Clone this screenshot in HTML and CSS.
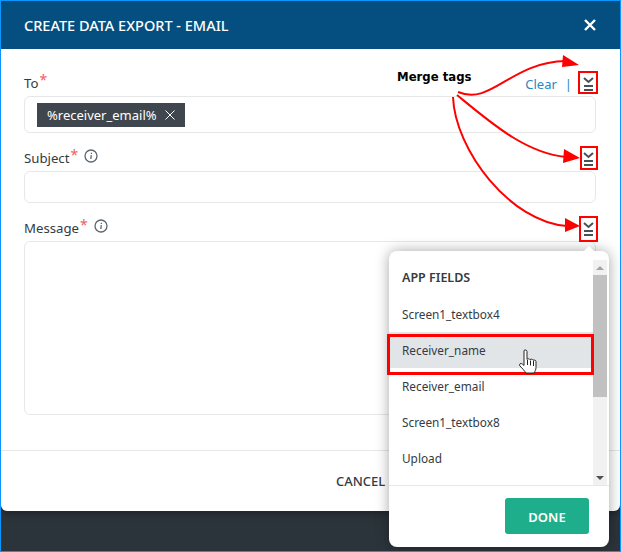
FILE: index.html
```html
<!DOCTYPE html>
<html lang="en">
<head>
  <meta charset="UTF-8" />
  <title>Create Data Export - Email</title>
  <link rel="stylesheet" href="styles.css">
</head>
<body>
  <div class="page">
    <div class="modal">
      <header class="modal-header">
        <h1>Create Data Export - Email</h1>
        <svg class="close-icon" width="14" height="14" viewBox="0 0 14 14"><path d="M2 2l10 10M12 2L2 12" /></svg>
      </header>

      <div class="modal-body">
        <div class="label-row label-first">
          <label>To<span class="req">*</span></label>
          <div class="label-actions">
            <a class="clear">Clear</a>
            <span class="divider">|</span>
            <svg class="tag-icon" width="11" height="14" viewBox="0 0 11 14"><path d="M1 1l4.500 4 4.500-4M1 9h9M1 13h9" /></svg>
          </div>
        </div>
        <div class="input input-to">
          <span class="chip">%receiver_email%
            <svg width="10" height="10" viewBox="0 0 10 10"><path d="M.5.5l9 9M9.500.5l-9 9" /></svg>
          </span>
        </div>

        <div class="label-row">
          <label>Subject<span class="req">*</span>
            <svg class="info-icon" width="14" height="14" viewBox="0 0 14 14"><circle cx="7" cy="7" r="6" /><path d="M7.300 6.200L6.800 10M7.400 3.800v1.200" /></svg>
          </label>
          <svg class="tag-icon" width="11" height="14" viewBox="0 0 11 14"><path d="M1 1l4.500 4 4.500-4M1 9h9M1 13h9" /></svg>
        </div>
        <div class="input input-subject"></div>

        <div class="label-row">
          <label>Message<span class="req">*</span>
            <svg class="info-icon" width="14" height="14" viewBox="0 0 14 14"><circle cx="7" cy="7" r="6" /><path d="M7.300 6.200L6.800 10M7.400 3.800v1.200" /></svg>
          </label>
          <svg class="tag-icon" width="11" height="14" viewBox="0 0 11 14"><path d="M1 1l4.500 4 4.500-4M1 9h9M1 13h9" /></svg>
        </div>
        <div class="input input-message"></div>
      </div>

      <footer class="modal-footer">
        <a class="cancel">Cancel</a>
      </footer>
    </div>

    <div class="popup">
      <div class="popup-list">
        <div class="popup-items">
          <h2>App Fields</h2>
          <div class="item">Screen1_textbox4</div>
          <div class="item active">Receiver_name</div>
          <div class="item">Receiver_email</div>
          <div class="item">Screen1_textbox8</div>
          <div class="item">Upload</div>
        </div>
        <div class="scrollbar">
          <span class="arrow-up"></span>
          <span class="thumb"></span>
          <span class="arrow-down"></span>
        </div>
      </div>
      <div class="popup-footer">
        <button class="done">Done</button>
      </div>
    </div>

    <!-- annotations drawn on top of the screenshot -->
    <span class="merge-note">Merge tags</span>
    <svg class="notes" width="621" height="552" viewBox="0 0 621 552">
      <g class="note-box">
        <rect x="579" y="72" width="18" height="21" />
        <rect x="581" y="147" width="16" height="22" />
        <rect x="580" y="217" width="17" height="24" />
        <rect class="note-row" x="388.500" y="335.500" width="204" height="38" />
      </g>
      <g class="note-line">
        <path d="M458 92C492 106 510 62 566 61" />
        <path d="M457 95C490 122 525 153 566 157" />
        <path d="M453 97C455 150 510 222 567 226" />
      </g>
      <g class="note-head">
        <path d="M579 65L563 55L562 67Z" />
        <path d="M580 158L564 149L563 163Z" />
        <path d="M580 226L565 218L565 232Z" />
      </g>
      <path class="hand" d="M524 350.500c1 -1 3 -.5 3 1v8c.5 -1 2.500 -1 3 .2c.8 -.8 2.500 -.7 3 .5c1 -.5 3 0 3 1.300v6c0 2.500 -1 3.500 -2 5.500h-8c-1.500 -2 -3.500 -4.500 -6 -7c-1 -1 -.5 -2.500 1 -2.500c.8 0 2 1 3 2v-15zM527.500 360v5M530.500 360.500v5M533.500 361v5" />
    </svg>
  </div>
</body>
</html>
```

FILE: styles.css
```css
:root {
  --header-color: #044f7f;
  --line-color: #e6e7e8;
  --text-color: #343b42;
  --red-note: #f00;
}

* {
  box-sizing: border-box;
}

body {
  margin: 0;
  font-family: "Noto Sans", sans-serif;
  font-size: 13px;
  color: var(--text-color);
}

.page {
  position: relative;
  width: 621px;
  height: 552px;
  overflow: hidden;
  background: #2c343b;
  border: 1px solid #0a96ff;
}

.modal {
  height: 510px;
  background: #fff;
  border-radius: 0 0 6px 6px;
  box-shadow: 0 2px 8px rgba(0,0,0,0.4);
}

.modal-header {
  display: flex;
  align-items: center;
  justify-content: space-between;
  height: 48px;
  padding: 0 23px;
  background: var(--header-color);
  color: #fff;
}

.modal-header h1 {
  margin: 0;
  font-size: 14.500px;
  font-weight: 500;
  text-transform: uppercase;
}

.close-icon path {
  fill: none;
  stroke: #fff;
  stroke-width: 2.400;
}

.modal-body {
  height: 402px;
  padding: 23px 24px 0 23px;
  border-bottom: 1px solid var(--line-color);
}

.label-row {
  display: flex;
  align-items: center;
  justify-content: space-between;
  height: 25px;
  margin-top: 13px;
}

.label-first {
  height: 24px;
  margin-top: 0;
}

.label-row label {
  display: flex;
  align-items: flex-start;
  margin-top: -2px;
  font-size: 13.200px;
}

.req {
  margin-left: 1px;
  color: #f0605c;
  font-size: 14px;
  line-height: 12px;
}

.info-icon {
  margin-left: 6px;
}

.info-icon circle, .info-icon path {
  fill: none;
  stroke: #5c6670;
  stroke-width: 1.300;
}

.label-actions {
  display: flex;
  align-items: center;
}

.clear {
  color: #2a87c0;
  font-size: 13px;
}

.divider {
  margin: 0 11px 0 8px;
  color: #2a87c0;
}

.tag-icon {
  margin-right: 2px;
}

.tag-icon path {
  fill: none;
  stroke: #4a5058;
  stroke-width: 2;
}

.input {
  border: 1px solid var(--line-color);
  border-radius: 6px;
}

.input-to {
  height: 37px;
  padding: 6px 12px;
}

.input-subject {
  height: 32px;
}

.input-message {
  height: 174px;
}

.chip {
  display: inline-flex;
  align-items: center;
  gap: 8px;
  height: 24px;
  padding: 0 10px;
  background: #40464d;
  color: #fff;
}

.chip path {
  fill: none;
  stroke: #fff;
  stroke-width: 1;
}

.modal-footer {
  display: flex;
  align-items: center;
  height: 60px;
  padding-left: 335px;
}

.cancel {
  font-size: 13px;
  font-weight: 500;
  text-transform: uppercase;
}

.popup {
  position: absolute;
  left: 388px;
  top: 250px;
  width: 220px;
  height: 296px;
  background: #fff;
  border-radius: 8px;
  box-shadow: 0 0 14px rgba(0,0,0,0.35);
}

.popup::before {
  content: "";
  position: absolute;
  top: -5px;
  left: 195px;
  border: 5px solid transparent;
  border-top: 0;
  border-bottom-color: #fff;
}

.popup-list {
  display: flex;
  height: 235px;
  border-bottom: 1px solid var(--line-color);
}

.popup-items {
  flex: 1;
  min-width: 0;
}

.popup-items h2 {
  margin: 0;
  height: 45px;
  padding: 18px 13px 0;
  font-size: 12.500px;
  font-weight: 600;
  line-height: 18px;
  text-transform: uppercase;
}

.item {
  display: flex;
  align-items: center;
  height: 36px;
  padding: 0 13px 1px;
  font-size: 11.800px;
}

.item.active {
  background: #e2e5e8;
}

.scrollbar {
  display: flex;
  flex-direction: column;
  align-items: center;
  width: 14px;
  margin: 9px 2px 0 0;
  background: #f1f1f1;
}

.arrow-up {
  margin: 6px 0 5px;
  border: 4px solid transparent;
  border-top: 0;
  border-bottom: 4px solid #a3a3a3;
}

.thumb {
  width: 14px;
  height: 122px;
  background: #c1c1c1;
}

.arrow-down {
  margin-top: auto;
  margin-bottom: 5px;
  border: 4px solid transparent;
  border-bottom: 0;
  border-top: 4px solid #505050;
}

.popup-footer {
  display: flex;
  justify-content: flex-end;
  padding: 12px 20px 0 0;
}

.done {
  width: 84px;
  height: 36px;
  padding: 2px 0 0;
  border: 0;
  border-radius: 3px;
  background: #1fae8b;
  color: #fff;
  font-family: inherit;
  font-size: 13px;
  font-weight: 600;
  text-transform: uppercase;
}

.merge-note {
  position: absolute;
  left: 396px;
  top: 69px;
  color: #000;
  font-family: "DejaVu Sans", sans-serif;
  font-size: 11.700px;
  font-weight: 700;
}

.notes {
  position: absolute;
  left: -1px;
  top: -1px;
}

.note-box rect {
  fill: none;
  stroke: var(--red-note);
  stroke-width: 2;
}

.note-box .note-row {
  stroke-width: 3;
}

.note-line path {
  fill: none;
  stroke: var(--red-note);
  stroke-width: 2;
}

.note-head path {
  fill: var(--red-note);
}

.hand {
  fill: #fff;
  stroke: #222;
  stroke-width: 1;
}
```
